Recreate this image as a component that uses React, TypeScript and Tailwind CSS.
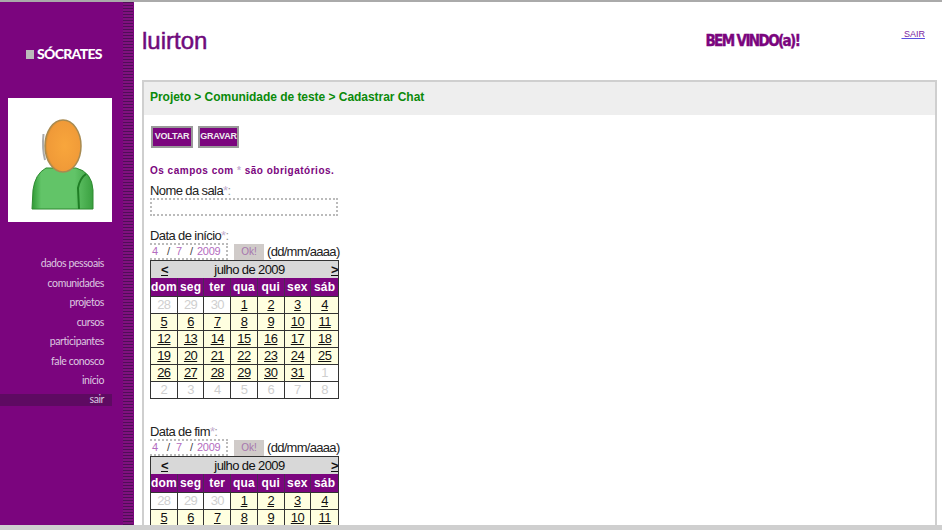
import React from "react";

const sans = "font-['Liberation_Sans',Arial,sans-serif]";
const heads = ["dom", "seg", "ter", "qua", "qui", "sex", "sáb"];
const days: [number, boolean][] = [
  [28, false], [29, false], [30, false], [1, true], [2, true], [3, true], [4, true],
  [5, true], [6, true], [7, true], [8, true], [9, true], [10, true], [11, true],
  [12, true], [13, true], [14, true], [15, true], [16, true], [17, true], [18, true],
  [19, true], [20, true], [21, true], [22, true], [23, true], [24, true], [25, true],
  [26, true], [27, true], [28, true], [29, true], [30, true], [31, true], [1, false],
  [2, false], [3, false], [4, false], [5, false], [6, false], [7, false], [8, false],
];
const menu = ["dados pessoais", "comunidades", "projetos", "cursos", "participantes", "fale conosco", "início"];

function Calendar() {
  return (
    <div className="w-[189px] border border-[#333] text-[13px] leading-[16px] tracking-[-0.6px]">
      <div className="flex h-[17px] items-center justify-between bg-[#d8d8d8] pl-[10px] pr-0 text-[#111]">
        <span className="font-bold underline">&lt;</span>
        <span>julho de 2009</span>
        <span className="font-bold underline">&gt;</span>
      </div>
      <div className="grid grid-cols-7 bg-[#7b057e]">
        {heads.map((h) => (
          <div key={h} className="flex h-[18px] items-center justify-center border-r border-[#4d2a55] text-[12px] font-bold tracking-[0.2px] text-white last:border-r-0">
            {h}
          </div>
        ))}
      </div>
      <div className="grid grid-cols-7">
        {days.map(([d, on], i) => (
          <div
            key={i}
            className={`flex h-[17px] items-center justify-center border-t border-r border-[#333] nth-[7n]:border-r-0 ${
              on ? "bg-[#ffffe0] text-[#111] underline" : "bg-white text-[#cfcfcf]"
            }`}
          >
            {d}
          </div>
        ))}
      </div>
    </div>
  );
}

function DateField({ label }: { label: string }) {
  return (
    <div>
      <div className="h-[14px] text-[13px] leading-[14px] tracking-[-0.6px] text-[#222]">
        {label}
        <span className="text-[#c4aed0]">*</span>
        <span className="text-[#999]">:</span>
      </div>
      <div className="flex h-[17px] items-center">
        <div className="flex h-[17px] w-[78px] items-center border-2 border-dotted border-[#bbb] border-l-0 text-[11px] tracking-[-0.3px] text-[#b36cc0]">
          <span className="w-[17px] pl-[2px]">4</span>
          <span className="w-[9px] text-[#444]">/</span>
          <span className="w-[14px]">7</span>
          <span className="w-[7px] text-[#444]">/</span>
          <span>2009</span>
        </div>
        <div className="ml-[6px] flex h-[16px] w-[30px] items-center justify-center bg-[#d0cbc9] text-[10px] text-[#a676ad]">Ok!</div>
        <span className="ml-[3px] text-[13px] tracking-[-0.7px] text-[#222]">(dd/mm/aaaa)</span>
      </div>
    </div>
  );
}

function Person() {
  return (
    <svg viewBox="0 0 104 124" className="h-[124px] w-[104px]">
      <defs>
        <radialGradient id="face" cx="0.55" cy="0.5" r="0.6">
          <stop offset="0" stopColor="#f8a63c" />
          <stop offset="0.8" stopColor="#f09a38" />
          <stop offset="1" stopColor="#b07a30" />
        </radialGradient>
        <linearGradient id="body" x1="0" y1="0" x2="1" y2="0">
          <stop offset="0" stopColor="#2f9a35" />
          <stop offset="0.15" stopColor="#62c468" />
          <stop offset="0.7" stopColor="#62c468" />
          <stop offset="1" stopColor="#3aa040" />
        </linearGradient>
      </defs>
      <path d="M24 111 L25 92 Q27 76 38 70 L68 70 Q84 74 85 92 L85 111 Z" fill="url(#body)" stroke="#2e8a30" strokeWidth="1" />
      <path d="M71 111 L70 90 Q72 80 78 76" fill="none" stroke="#1f7d25" strokeWidth="2" />
      <path d="M35.500 36 Q34 50 37 62" fill="none" stroke="#aaa" strokeWidth="2" />
      <ellipse cx="55" cy="48" rx="18" ry="26" fill="url(#face)" stroke="#a88a50" strokeWidth="1.5" />
    </svg>
  );
}

export default function App() {
  return (
    <div className={`flex h-[530px] w-[942px] flex-col overflow-hidden bg-white ${sans}`}>
      <div className="h-[2px] bg-[#aaa]" />
      <div className="flex min-h-0 flex-1">
        <aside className="flex w-[134px] shrink-0 bg-[#7b057e]">
          <div className="w-[123px] shrink-0">
            <div className="mt-[43px] flex items-center pl-[26px] font-['Lato',sans-serif] text-[14px] font-black leading-[18px] tracking-[-0.7px] text-white">
              <span className="mr-[3px] h-[9px] w-[8px] bg-[#bbb]" />
              SÓCRATES
            </div>
            <div className="ml-[8px] mt-[35px] w-[104px] bg-white">
              <Person />
            </div>
            <nav className="mt-[32px] font-['Lato',sans-serif] text-[10.5px] tracking-[-0.4px] text-[#ddc8e0]">
              {menu.map((m) => (
                <div key={m} className="flex h-[19.6px] w-[112px] items-center justify-end pr-[8px]">
                  {m}
                </div>
              ))}
              <div className="mt-[3px] flex h-[12px] w-[112px] items-center justify-end bg-[#5e0a62] pr-[8px]">sair</div>
            </nav>
          </div>
          <div className="w-[10px] bg-[repeating-linear-gradient(0deg,#4f0e57_0px,#4f0e57_1px,#80107f_1px,#80107f_3px)]" />
          <div className="w-[1px]" />
        </aside>
        <main className="min-w-0 flex-1 pl-[8px] pr-[5px]">
          <header className="relative flex h-[78px] items-start">
            <h1 className="mt-[24px] text-[24px] leading-[30px] text-[#6f0a7c] [-webkit-text-stroke:0.5px_#6f0a7c]">luirton</h1>
            <div className="ml-[498px] mt-[27px] font-['DejaVu_Sans_Condensed','DejaVu_Sans',sans-serif] text-[15px] font-bold leading-[24px] tracking-[-1.6px] text-[#7b057e] [-webkit-text-stroke:0.4px_#7b057e]">BEM VINDO(a)!</div>
            <a className="ml-auto mr-[12px] mt-[26px] text-[9px] leading-[12px] text-[#7b1fa2] underline decoration-[#5b4fe0]">&nbsp;SAIR</a>
          </header>
          <section className="border-2 border-b-0 border-[#cfcfcf]">
            <div className="flex h-[33px] items-center bg-[#eeeeee] pb-[4px] pl-[6px] text-[12px] font-bold tracking-[-0.04px] text-[#0a8a0a]">
              Projeto &gt; Comunidade de teste &gt; Cadastrar Chat
            </div>
            <div className="pl-[6px]">
              <div className="ml-[1px] mt-[11px] flex gap-[5px]">
                <button className="h-[22px] w-[42px] border-2 border-[#999] bg-[#7b057e] text-[9px] font-bold tracking-[-0.2px] text-[#eee]">VOLTAR</button>
                <button className="h-[22px] w-[41px] border-2 border-[#999] bg-[#7b057e] text-[9px] font-bold tracking-[-0.2px] text-[#eee]">GRAVAR</button>
              </div>
              <p className="mt-[16px] h-[14px] text-[10px] font-bold leading-[14px] tracking-[0.5px] text-[#7b057e]">
                Os campos com <span className="text-[#c4aed0]">*</span> são obrigatórios.
              </p>
              <div className="mt-[6px] h-[14px] text-[13px] leading-[14px] tracking-[-0.6px] text-[#222]">
                Nome da sala<span className="text-[#c4aed0]">*</span><span className="text-[#999]">:</span>
              </div>
              <div className="h-[18px] w-[188px] border-2 border-dotted border-[#bbb]" />
              <div className="mt-[13px]">
                <DateField label="Data de início" />
                <Calendar />
              </div>
              <div className="mt-[26px]">
                <DateField label="Data de fim" />
                <Calendar />
              </div>
            </div>
          </section>
        </main>
      </div>
      <div className="h-[5px] shrink-0 bg-[#cfcfcf]" />
    </div>
  );
}
